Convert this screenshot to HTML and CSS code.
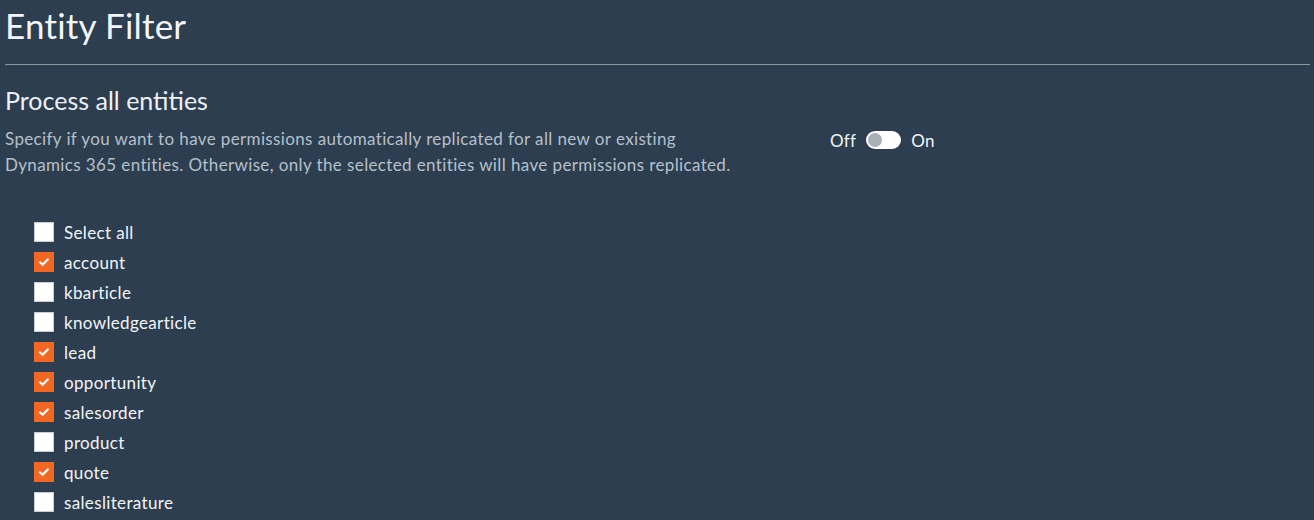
FILE: index.html
```html
<!DOCTYPE html>
<html>
<head>
<meta charset="utf-8">
<link rel="stylesheet" href="styles.css">
</head>
<body>
<div class="page">
  <h1 class="title">Entity Filter</h1>
  <hr class="rule">
  <h2 class="subtitle">Process all entities</h2>
  <div class="setting">
    <p class="desc">Specify if you want to have permissions automatically replicated for all new or existing Dynamics 365 entities. Otherwise, only the selected entities will have permissions replicated.</p>
    <div class="toggle-wrap">
      <span class="toggle-label">Off</span>
      <span class="toggle"><span class="knob"></span></span>
      <span class="toggle-label">On</span>
    </div>
  </div>
  <ul class="list">
    <li class="item"><span class="box"></span><span class="label">Select all</span></li>
    <li class="item"><span class="box checked"><svg viewBox="0 0 20 20" width="20" height="20"><path d="M6 10.3 L8.6 12.8 L13.8 7.4" fill="none" stroke="#fff" stroke-width="2.2" stroke-linecap="round" stroke-linejoin="round"/></svg></span><span class="label">account</span></li>
    <li class="item"><span class="box"></span><span class="label">kbarticle</span></li>
    <li class="item"><span class="box"></span><span class="label">knowledgearticle</span></li>
    <li class="item"><span class="box checked"><svg viewBox="0 0 20 20" width="20" height="20"><path d="M6 10.3 L8.6 12.8 L13.8 7.4" fill="none" stroke="#fff" stroke-width="2.2" stroke-linecap="round" stroke-linejoin="round"/></svg></span><span class="label">lead</span></li>
    <li class="item"><span class="box checked"><svg viewBox="0 0 20 20" width="20" height="20"><path d="M6 10.3 L8.6 12.8 L13.8 7.4" fill="none" stroke="#fff" stroke-width="2.2" stroke-linecap="round" stroke-linejoin="round"/></svg></span><span class="label">opportunity</span></li>
    <li class="item"><span class="box checked"><svg viewBox="0 0 20 20" width="20" height="20"><path d="M6 10.3 L8.6 12.8 L13.8 7.4" fill="none" stroke="#fff" stroke-width="2.2" stroke-linecap="round" stroke-linejoin="round"/></svg></span><span class="label">salesorder</span></li>
    <li class="item"><span class="box"></span><span class="label">product</span></li>
    <li class="item"><span class="box checked"><svg viewBox="0 0 20 20" width="20" height="20"><path d="M6 10.3 L8.6 12.8 L13.8 7.4" fill="none" stroke="#fff" stroke-width="2.2" stroke-linecap="round" stroke-linejoin="round"/></svg></span><span class="label">quote</span></li>
    <li class="item"><span class="box"></span><span class="label">salesliterature</span></li>
  </ul>
</div>
</body>
</html>
```
FILE: styles.css
```css
html, body {
  margin: 0;
  padding: 0;
  background: #2c3e50;
  height: 100%;
  overflow: hidden;
}
body {
  font-family: Lato, "Open Sans", sans-serif;
  color: #ffffff;
}
.page {
  padding: 0 4px 0 5px;
}
.title {
  margin: 0;
  padding-top: 3px;
  font-size: 35px;
  letter-spacing: 0.2px;
  font-weight: 400;
  line-height: 44px;
  color: #f3f5f7;
}
.rule {
  margin: 17px 0 0 0;
  border: 0;
  border-top: 1px solid #8d969f;
  height: 0;
}
.subtitle {
  margin: 20px 0 0 0;
  font-size: 25px;
  font-weight: 400;
  line-height: 30px;
  color: #eef1f4;
}
.setting {
  display: flex;
  align-items: flex-start;
  margin-top: 11px;
}
.desc {
  margin: 0;
  width: 745px;
  font-size: 17px;
  letter-spacing: 0.35px;
  word-spacing: 0.2px;
  line-height: 26px;
  color: #b7c0ca;
}
.toggle-wrap {
  display: flex;
  align-items: center;
  gap: 10px;
  margin-left: 80px;
  height: 28px;
  font-size: 17px;
  letter-spacing: 0.3px;
  color: #f3f5f7;
}
.toggle {
  width: 35px;
  height: 18px;
  border-radius: 9px;
  background: #ffffff;
  position: relative;
  display: inline-block;
}
.knob {
  position: absolute;
  left: 2px;
  top: 2px;
  width: 14px;
  height: 14px;
  border-radius: 50%;
  background: #a8b0b8;
}
.list {
  list-style: none;
  margin: 39px 0 0 0;
  padding: 0 0 0 29px;
}
.item {
  display: flex;
  align-items: center;
  height: 30px;
}
.box {
  width: 20px;
  height: 20px;
  box-sizing: border-box;
  background: #ffffff;
  border: 1px solid #c8ced4;
  display: inline-flex;
}
.box.checked {
  background: #f26722;
  border-color: #f26722;
}
.box svg {
  margin: -1px;
}
.label {
  margin-left: 10px;
  font-size: 17px;
  letter-spacing: 0.35px;
  color: #f3f5f7;
}
```
